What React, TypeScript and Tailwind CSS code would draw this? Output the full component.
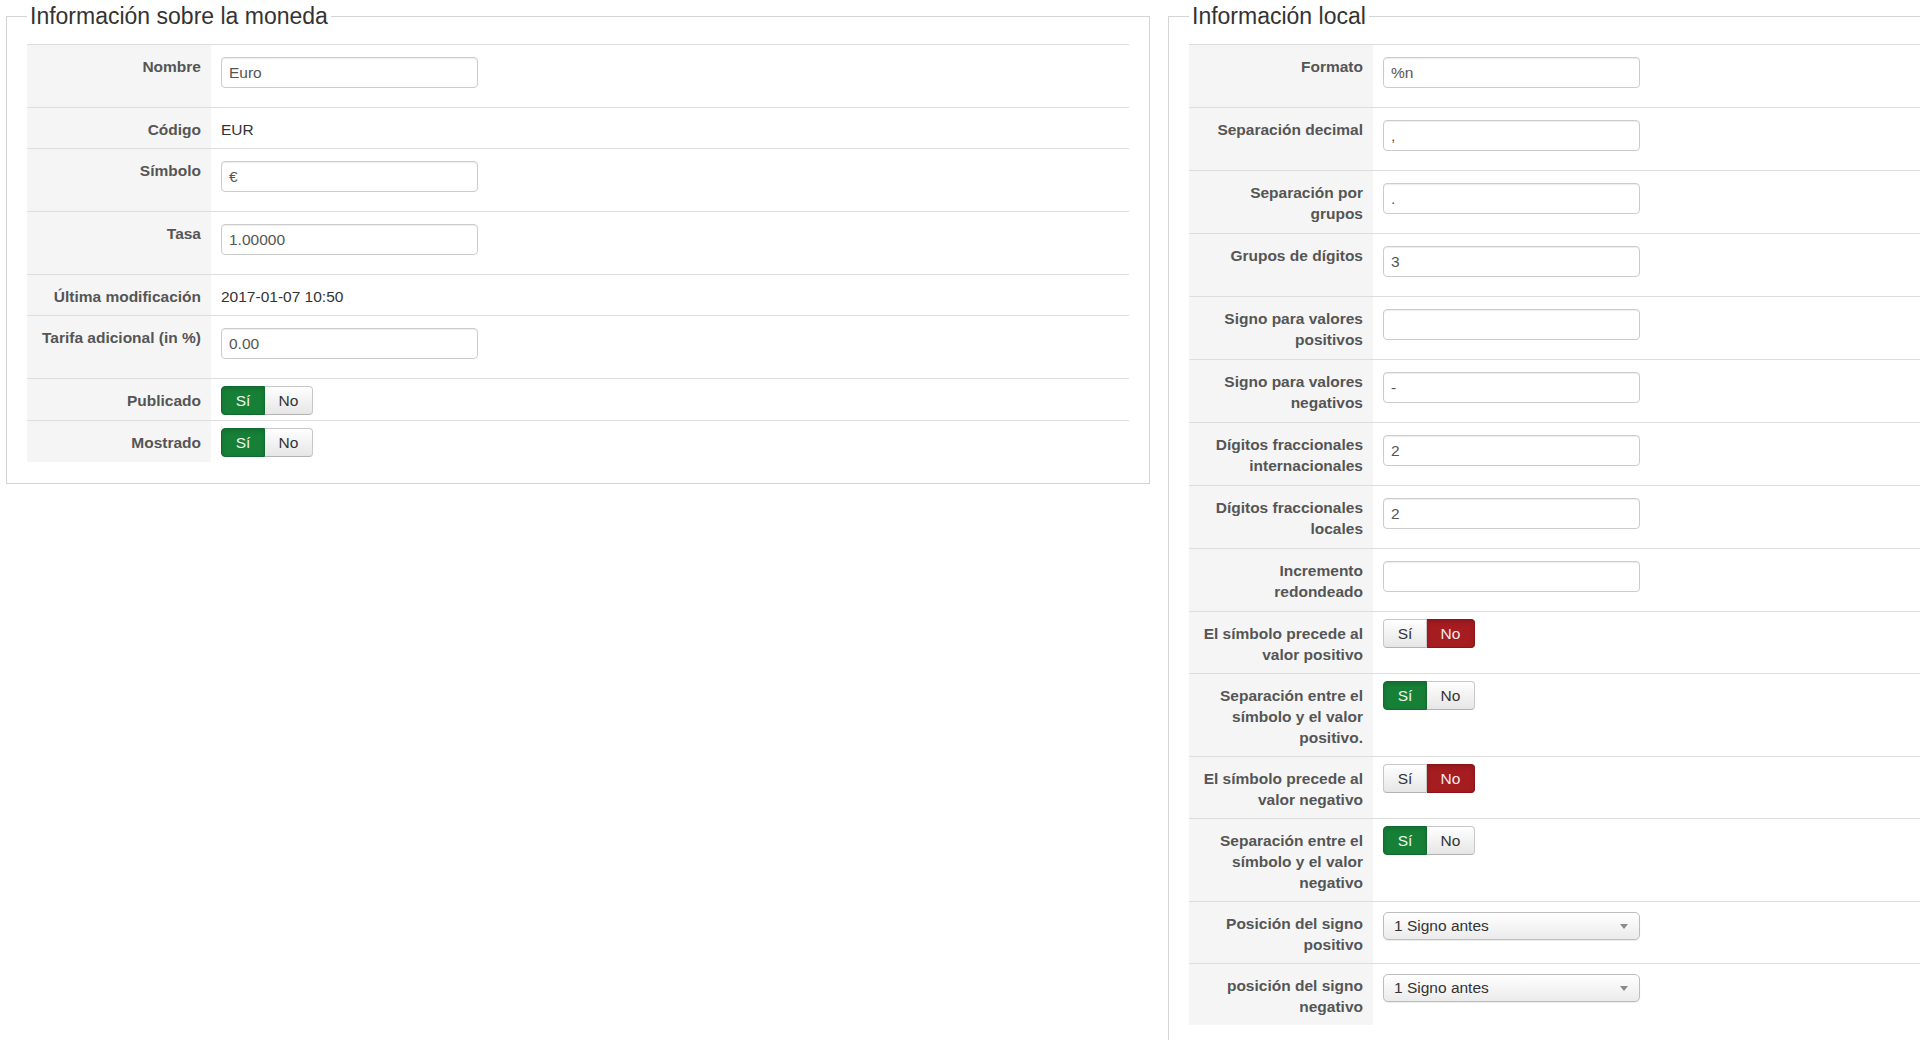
import React from 'react'

type Row =
  | { kind: 'input'; label: string[]; value: string }
  | { kind: 'text'; label: string[]; value: string }
  | { kind: 'toggle'; label: string[]; value: boolean }
  | { kind: 'select'; label: string[]; value: string }

const currencyRows: Row[] = [
  { kind: 'input', label: ['Nombre'], value: 'Euro' },
  { kind: 'text', label: ['Código'], value: 'EUR' },
  { kind: 'input', label: ['Símbolo'], value: '€' },
  { kind: 'input', label: ['Tasa'], value: '1.00000' },
  { kind: 'text', label: ['Última modificación'], value: '2017-01-07 10:50' },
  { kind: 'input', label: ['Tarifa adicional (in %)'], value: '0.00' },
  { kind: 'toggle', label: ['Publicado'], value: true },
  { kind: 'toggle', label: ['Mostrado'], value: true },
]

const localeRows: Row[] = [
  { kind: 'input', label: ['Formato'], value: '%n' },
  { kind: 'input', label: ['Separación decimal'], value: ',' },
  { kind: 'input', label: ['Separación por', 'grupos'], value: '.' },
  { kind: 'input', label: ['Grupos de dígitos'], value: '3' },
  { kind: 'input', label: ['Signo para valores', 'positivos'], value: '' },
  { kind: 'input', label: ['Signo para valores', 'negativos'], value: '-' },
  { kind: 'input', label: ['Dígitos fraccionales', 'internacionales'], value: '2' },
  { kind: 'input', label: ['Dígitos fraccionales', 'locales'], value: '2' },
  { kind: 'input', label: ['Incremento', 'redondeado'], value: '' },
  { kind: 'toggle', label: ['El símbolo precede al', 'valor positivo'], value: false },
  { kind: 'toggle', label: ['Separación entre el', 'símbolo y el valor', 'positivo.'], value: true },
  { kind: 'toggle', label: ['El símbolo precede al', 'valor negativo'], value: false },
  { kind: 'toggle', label: ['Separación entre el', 'símbolo y el valor', 'negativo'], value: true },
  { kind: 'select', label: ['Posición del signo', 'positivo'], value: '1 Signo antes' },
  { kind: 'select', label: ['posición del signo', 'negativo'], value: '1 Signo antes' },
]

const Toggle: React.FC<{ on: boolean }> = ({ on }) => (
  <div className="flex h-[29px] text-[15.5px] leading-none">
    <span
      className={
        on
          ? 'flex w-[44px] items-center justify-center rounded-l-[4px] border border-[#106b2e] bg-[#168037] text-[#eef6f0] shadow-[inset_0_2px_4px_rgba(0,0,0,0.15)]'
          : 'flex w-[44px] items-center justify-center rounded-l-[4px] border border-[#c8c8c8] border-b-[#b3b3b3] bg-linear-to-b from-white to-[#e6e6e6] text-[#333]'
      }
    >
      Sí
    </span>
    <span
      className={
        on
          ? 'flex w-[48px] items-center justify-center rounded-r-[4px] border border-l-0 border-[#c8c8c8] border-b-[#b3b3b3] bg-linear-to-b from-white to-[#e6e6e6] text-[#333]'
          : 'flex w-[48px] items-center justify-center rounded-r-[4px] border border-l-0 border-[#8a1418] bg-[#a51c21] text-[#f8ecec] shadow-[inset_0_2px_4px_rgba(0,0,0,0.15)]'
      }
    >
      No
    </span>
  </div>
)

const Value: React.FC<{ row: Row }> = ({ row }) => {
  switch (row.kind) {
    case 'input':
      return (
        <div className="pt-[12px] pb-[19px] pl-[10px]">
          <input
            readOnly
            value={row.value}
            className="h-[31px] w-[257px] rounded-[4px] border border-[#cccccc] bg-white px-[7px] text-[15.5px] text-[#555] shadow-[inset_0_1px_1px_rgba(0,0,0,0.075)] outline-none"
          />
        </div>
      )
    case 'text':
      return <div className="pt-[11px] pb-[8px] pl-[10px] text-[15.5px] leading-[21px] text-[#333]">{row.value}</div>
    case 'toggle':
      return (
        <div className="pt-[7px] pb-[5px] pl-[10px]">
          <Toggle on={row.value} />
        </div>
      )
    case 'select':
      return (
        <div className="pt-[10px] pb-[8px] pl-[10px]">
          <div className="flex h-[28px] w-[257px] items-center justify-between rounded-[5px] border border-[#bdbdbd] bg-linear-to-b from-white to-[#ebebeb] pr-[11px] pl-[10px] text-[15.5px] text-[#333] shadow-[0_1px_1px_rgba(0,0,0,0.08)]">
            <span>{row.value}</span>
            <svg width="8" height="5" viewBox="0 0 8 5">
              <path d="M0 0h8L4 5z" fill="#8a8a8a" />
            </svg>
          </div>
        </div>
      )
  }
}

const Fieldset: React.FC<{ title: string; rows: Row[] }> = ({ title, rows }) => (
  <fieldset className="w-[1144px] shrink-0 border border-[#d4d4d4] px-[20px] pt-[12px] pb-[21px]">
    <legend className="px-[3px] text-[23px] leading-[32px] text-[#333]">{title}</legend>
    <div className="flex flex-col">
      {rows.map((row, i) => (
        <div key={i} className="flex border-t border-[#dddddd]">
          <div className="w-[184px] shrink-0 bg-[#f5f5f5] pt-[11px] pr-[10px] pb-[8px] text-right text-[15.5px] leading-[21px] font-bold whitespace-nowrap text-[#555]">
            {row.label.map((line, j) => (
              <div key={j}>{line}</div>
            ))}
          </div>
          <div className="flex-1">
            <Value row={row} />
          </div>
        </div>
      ))}
    </div>
  </fieldset>
)

export default function App() {
  return (
    <div className="flex h-[1040px] w-[1920px] items-start gap-[18px] overflow-hidden bg-white pl-[6px] font-['Liberation_Sans',Arial,sans-serif]">
      <Fieldset title="Información sobre la moneda" rows={currencyRows} />
      <Fieldset title="Información local" rows={localeRows} />
    </div>
  )
}
